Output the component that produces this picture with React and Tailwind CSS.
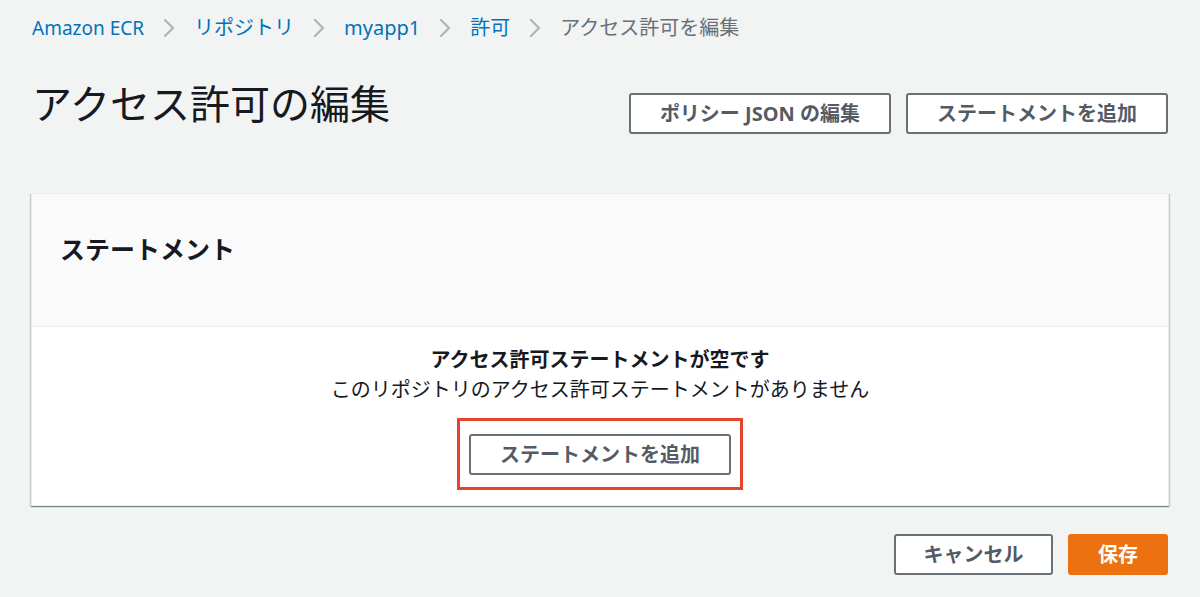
import React from 'react';

const FONT = { fontFamily: '"Noto Sans", "Noto Sans CJK JP", sans-serif' };

const Chevron = () => (
    <svg width="12" height="20" viewBox="0 0 12 20" fill="none" className="mx-[19px]">
        <path d="M2 2 L10 10 L2 18" stroke="#aab7b8" strokeWidth="2.2" strokeLinecap="round" strokeLinejoin="round" />
    </svg>
);

const OutlineButton = ({ children, className = 'px-[29px]' }) => (
    <button className={`h-[41px] whitespace-nowrap rounded-[3px] border-2 border-[#687078] bg-white text-[#545b64] text-[20px] font-bold leading-none ${className}`}>
        {children}
    </button>
);

const App = () => {
    const crumbs = ['Amazon ECR', 'リポジトリ', 'myapp1', '許可'];

    return (
        <div className="min-h-[597px] w-[1200px] bg-[#f2f3f3] px-[31px] pt-[14px]" style={FONT}>
            {/* Breadcrumb */}
            <nav className="flex items-center h-[28px] pl-[1px] text-[20px]">
                {crumbs.map((c) => (
                    <React.Fragment key={c}>
                        <span className={c === 'Amazon ECR' ? 'text-[#0073bb] text-[19px]' : 'text-[#0073bb]'}>{c}</span>
                        <Chevron />
                    </React.Fragment>
                ))}
                <span className="text-[#687078]">アクセス許可を編集</span>
            </nav>

            {/* Header */}
            <div className="flex justify-between items-start mt-[38px]">
                <h1 className="text-[40px] leading-[48px] text-[#16191f] font-normal pl-[1px]">アクセス許可の編集</h1>
                <div className="flex gap-[15px] mt-[13px] pr-[1px]">
                    <OutlineButton>ポリシー JSON の編集</OutlineButton>
                    <OutlineButton>ステートメントを追加</OutlineButton>
                </div>
            </div>

            {/* Card */}
            <div className="mt-[59px] bg-white border border-[#eaeded] shadow-[0_1px_1px_0_rgba(0,28,36,0.3),1px_1px_1px_0_rgba(0,28,36,0.15),-1px_1px_1px_0_rgba(0,28,36,0.15)]">
                <div className="h-[133px] bg-[#fafafa] border-b border-[#eaeded] px-[28px] pt-[38px]">
                    <h2 className="text-[25px] leading-[34px] font-bold text-[#16191f]">ステートメント</h2>
                </div>
                <div className="flex flex-col items-center pt-[18px] pb-[15px] text-[20px] leading-[30px] text-[#16191f]">
                    <p className="font-bold">アクセス許可ステートメントが空です</p>
                    <p>このリポジトリのアクセス許可ステートメントがありません</p>
                    <div className="mt-[13px] border-[3px] border-[#e8432e] px-[9px] pt-[13px] pb-[12px]">
                        <OutlineButton className="w-[262px]">ステートメントを追加</OutlineButton>
                    </div>
                </div>
            </div>

            {/* Footer */}
            <div className="flex justify-end gap-[15px] mt-[28px] pr-[1px]">
                <OutlineButton className="w-[159px]">キャンセル</OutlineButton>
                <button className="h-[41px] w-[100px] rounded-[3px] bg-[#ec7211] text-white text-[20px] font-bold leading-none">保存</button>
            </div>
        </div>
    );
};

export default App;
